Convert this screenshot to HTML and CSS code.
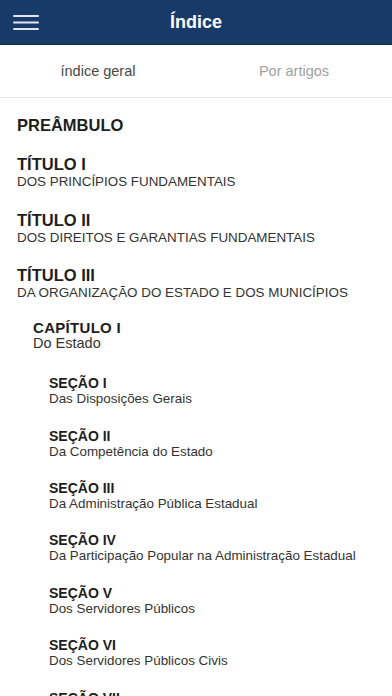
FILE: index.html
```html
<!DOCTYPE html>
<html lang="pt">
<head>
    <meta charset="UTF-8">
    <meta name="viewport" content="width=device-width, initial-scale=1.0">
    <title>Índice</title>
    <link rel="stylesheet" href="styles.css">
</head>
<body>
    <!-- Top bar -->
    <header class="top-bar">
        <button class="menu-button" aria-label="Menu">
            <svg width="26" height="15" viewBox="0 0 26 15">
                <rect x="0" y="0" width="26" height="2" rx="1"/>
                <rect x="0" y="6.5" width="26" height="2" rx="1"/>
                <rect x="0" y="13" width="26" height="2" rx="1"/>
            </svg>
        </button>
        <h1>Índice</h1>
    </header>

    <!-- Tabs -->
    <nav class="tabs">
        <div class="tab active">índice geral</div>
        <div class="tab">Por artigos</div>
    </nav>

    <!-- Index list -->
    <ul class="index-list">
        <li class="entry level-1">
            <div class="entry-title">PREÂMBULO</div>
        </li>
        <li class="entry level-1">
            <div class="entry-title">TÍTULO I</div>
            <div class="entry-sub">DOS PRINCÍPIOS FUNDAMENTAIS</div>
        </li>
        <li class="entry level-1">
            <div class="entry-title">TÍTULO II</div>
            <div class="entry-sub">DOS DIREITOS E GARANTIAS FUNDAMENTAIS</div>
        </li>
        <li class="entry level-1">
            <div class="entry-title">TÍTULO III</div>
            <div class="entry-sub">DA ORGANIZAÇÃO DO ESTADO E DOS MUNICÍPIOS</div>
        </li>
        <li class="entry level-2">
            <div class="entry-title">CAPÍTULO I</div>
            <div class="entry-sub">Do Estado</div>
        </li>
        <li class="entry level-3">
            <div class="entry-title">SEÇÃO I</div>
            <div class="entry-sub">Das Disposições Gerais</div>
        </li>
        <li class="entry level-3">
            <div class="entry-title">SEÇÃO II</div>
            <div class="entry-sub">Da Competência do Estado</div>
        </li>
        <li class="entry level-3">
            <div class="entry-title">SEÇÃO III</div>
            <div class="entry-sub">Da Administração Pública Estadual</div>
        </li>
        <li class="entry level-3">
            <div class="entry-title">SEÇÃO IV</div>
            <div class="entry-sub">Da Participação Popular na Administração Estadual</div>
        </li>
        <li class="entry level-3">
            <div class="entry-title">SEÇÃO V</div>
            <div class="entry-sub">Dos Servidores Públicos</div>
        </li>
        <li class="entry level-3">
            <div class="entry-title">SEÇÃO VI</div>
            <div class="entry-sub">Dos Servidores Públicos Civis</div>
        </li>
        <li class="entry level-3">
            <div class="entry-title">SEÇÃO VII</div>
        </li>
    </ul>
</body>
</html>
```

FILE: styles.css
```css
* {
    box-sizing: border-box;
    margin: 0;
    padding: 0;
    font-family: 'Liberation Sans', Arial, Helvetica, sans-serif;
}

body {
    background-color: #ffffff;
    color: #222222;
    width: 392px;
    height: 696px;
    overflow: hidden;
}

.top-bar {
    position: relative;
    height: 45px;
    background-color: #173a69;
    border-bottom: 1px solid #0f2a4e;
    display: flex;
    align-items: center;
    justify-content: center;
}

.top-bar h1 {
    font-size: 18px;
    font-weight: bold;
    color: #ffffff;
    line-height: 20px;
}

.menu-button {
    position: absolute;
    left: 13px;
    top: 15px;
    width: 26px;
    height: 15px;
    border: none;
    background: none;
    cursor: pointer;
}

.menu-button svg {
    display: block;
    fill: #dfe6ef;
}

.tabs {
    display: flex;
    height: 53px;
    border-bottom: 1px solid #e6e6e6;
}

.tab {
    flex: 1;
    display: flex;
    align-items: center;
    justify-content: center;
    font-size: 14.5px;
    color: #a0a0a0;
    padding-bottom: 1px;
}

.tab.active {
    color: #474747;
}

.index-list {
    list-style: none;
    padding-top: 17px;
}

.entry {
    margin-bottom: 19.3px;
}

.entry-title {
    font-weight: bold;
    color: #1e1e1e;
}

.entry-sub {
    color: #333333;
}

.level-1 {
    padding-left: 17px;
}

.level-1 .entry-title {
    font-size: 16.5px;
    line-height: 20px;
}

.level-1 .entry-sub {
    font-size: 13.4px;
    line-height: 16px;
}

.level-2 {
    padding-left: 33px;
    margin-top: 6px;
    margin-bottom: 23px;
}

.level-2 .entry-title {
    font-size: 15px;
    line-height: 15px;
    letter-spacing: 0.3px;
}

.level-2 .entry-sub {
    font-size: 14.5px;
    line-height: 17px;
}

.level-3 {
    padding-left: 49px;
    margin-bottom: 20.4px;
}

.level-3 .entry-title {
    font-size: 14px;
    line-height: 16px;
}

.level-3 .entry-sub {
    font-size: 13.4px;
    line-height: 16px;
}
```
